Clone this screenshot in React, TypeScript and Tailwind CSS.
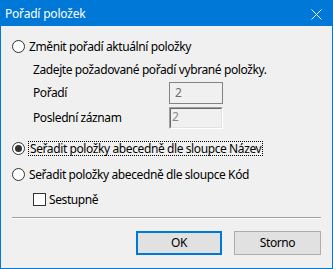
import React from 'react';

const font = { fontFamily: '"Noto Sans", "Liberation Sans", sans-serif' };

function Radio({ checked }: { checked?: boolean }) {
  return (
    <span className="w-[13px] h-[13px] rounded-full border border-[#333333] bg-white flex items-center justify-center shrink-0">
      {checked && <span className="w-[7px] h-[7px] rounded-full bg-[#333333]" />}
    </span>
  );
}

export default function App() {
  return (
    <div
      className="w-[333px] h-[269px] border border-[#0078d7] bg-[#f0f0f0] flex flex-col text-[12px] tracking-[-0.4px] text-black leading-none"
      style={font}
    >
      {/* Title bar */}
      <div className="h-[25px] bg-[#0078d7] flex items-center justify-between pl-[4px] pr-[10px] text-white">
        <span className="tracking-[-0.2px]">Pořadí položek</span>
        <svg width="11" height="11" viewBox="0 0 11 11" className="mt-[1px]">
          <path d="M0.5 0.5 L10.5 10.5 M10.5 0.5 L0.5 10.5" stroke="#ffffff" strokeWidth="1" />
        </svg>
      </div>

      <div className="flex-1 flex flex-col pl-[11px] pr-[11px] pt-[12px]">
        {/* Option 1 */}
        <div className="h-[17px] flex items-center gap-[3px]">
          <Radio />
          <span className="px-[1px]">Změnit pořadí aktuální položky</span>
        </div>
        <div className="h-[16px] mt-[7px] pl-[21px] flex items-center">
          Zadejte požadované pořadí vybrané položky.
        </div>
        <div className="h-[22px] mt-[4px] pl-[21px] flex items-center">
          <span className="w-[136px]">Pořadí</span>
          <div className="w-[54px] h-[22px] border border-[#838383] bg-[#f0f0f0] flex items-center pl-[5px] text-[#6d6d6d]">
            2
          </div>
        </div>
        <div className="h-[22px] mt-[3px] pl-[21px] flex items-center">
          <span className="w-[136px]">Poslední záznam</span>
          <div className="w-[54px] h-[22px] border border-t-[#a0a0a0] border-l-[#a0a0a0] border-b-white border-r-white">
            <div className="w-full h-full border border-t-[#696969] border-l-[#696969] border-b-[#e3e3e3] border-r-[#e3e3e3] bg-[#f0f0f0] pl-[1px] pt-[2px] text-[#8a8a8a]">
              2
            </div>
          </div>
        </div>

        {/* Option 2 */}
        <div className="h-[17px] mt-[11px] flex items-center gap-[3px]">
          <Radio checked />
          <span className="border border-dotted border-black px-[1px] h-[15px] flex items-center">
            Seřadit položky abecedně dle sloupce Název
          </span>
        </div>

        {/* Option 3 */}
        <div className="h-[17px] mt-[9px] flex items-center gap-[3px]">
          <Radio />
          <span className="px-[1px]">Seřadit položky abecedně dle sloupce Kód</span>
        </div>
        <div className="h-[13px] mt-[10px] pl-[21px] flex items-center gap-[3px]">
          <span className="w-[13px] h-[13px] border border-[#333333] bg-white shrink-0" />
          <span>Sestupně</span>
        </div>

        {/* Separator */}
        <div className="mt-[11px] h-px bg-[#a0a0a0]" />
        <div className="h-px bg-white" />

        {/* Buttons */}
        <div className="mt-[12px] flex justify-end gap-[12px]">
          <button className="w-[86px] h-[24px] border-2 border-[#0078d7] bg-[#e1e1e1] flex items-center justify-center">
            OK
          </button>
          <button className="w-[87px] h-[24px] border border-[#adadad] bg-[#e1e1e1] flex items-center justify-center">
            Storno
          </button>
        </div>
      </div>
    </div>
  );
}
